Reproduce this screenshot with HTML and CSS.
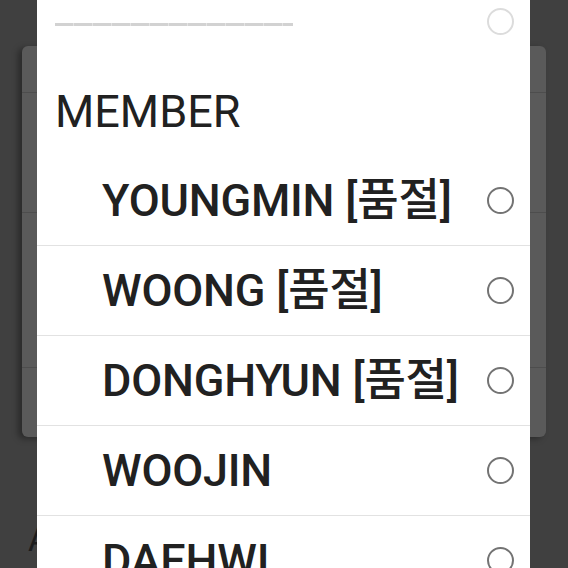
FILE: index.html
```html
<!DOCTYPE html>
<html>
<head>
<meta charset="utf-8">
<meta name="viewport" content="width=device-width, initial-scale=1.0">
<title>Option select</title>
<link rel="stylesheet" href="styles.css">
</head>
<body>
<div class="page">
  <div class="card">
    <div class="card-row r1"></div>
    <div class="card-row r2"></div>
    <div class="card-row r3"></div>
    <div class="card-row r4"></div>
  </div>
  <div class="page-label">A</div>
</div>

<div class="dialog">
  <ul class="options">
    <li class="opt opt-top">
      <span class="dash"></span>
      <span class="radio radio-off"></span>
    </li>
    <li class="group">MEMBER</li>
    <li class="opt item"><span class="name">YOUNGMIN [품절]</span><span class="radio"></span></li>
    <li class="opt item"><span class="name">WOONG [품절]</span><span class="radio"></span></li>
    <li class="opt item"><span class="name">DONGHYUN [품절]</span><span class="radio"></span></li>
    <li class="opt item"><span class="name">WOOJIN</span><span class="radio"></span></li>
    <li class="opt item"><span class="name">DAEHWI</span><span class="radio"></span></li>
  </ul>
</div>
</body>
</html>
```

FILE: styles.css
```css
html, body {
  margin: 0;
  height: 100%;
}
body {
  background: #404040;
  font-family: Roboto, "Noto Sans CJK KR", sans-serif;
  color: #212121;
  overflow: hidden;
}
*, *:before, *:after { box-sizing: border-box; }

/* page behind the dialog */
.page { padding: 46px 22px 0; }
.card {
  height: 391px;
  background: #5a5a5a;
  border-radius: 6px;
  box-shadow: -4px 2px 6px rgba(0, 0, 0, .35);
}
.card-row { border-bottom: 1px solid #4d4d4d; }
.r1 { height: 47px; }
.r2 { height: 120px; }
.r3 { height: 155px; }
.r4 { border-bottom: 0; }
.page-label {
  margin: 86px 0 0 6px;
  font-size: 33px;
  line-height: 1;
  color: #1c1c1c;
}

/* dialog */
.dialog {
  position: fixed;
  top: 0;
  left: 37px;
  width: 493px;
  height: 568px;
  background: #fff;
  overflow: hidden;
}
.options {
  list-style: none;
  margin: -24px 0 0;
  padding: 0;
}
.opt, .group {
  height: 90px;
  display: flex;
  align-items: center;
}
.opt {
  justify-content: space-between;
  padding-right: 16px;
}
.opt-top { padding-left: 18px; }
.dash {
  width: 238px;
  height: 3px;
  margin-top: 6px;
  background: repeating-linear-gradient(90deg, #d2d2d2 0 18px, #e4e4e4 18px 19px);
}
.group {
  padding-left: 18px;
  font-size: 45px;
  font-weight: 400;
}
.item {
  padding-left: 65px;
  border-bottom: 1px solid #e2e2e2;
  font-size: 45px;
  font-weight: 500;
  letter-spacing: -0.2px;
}
.name { line-height: 1; }
.radio {
  width: 27px;
  height: 27px;
  border: 2.5px solid #737373;
  border-radius: 50%;
  flex: none;
}
.radio-off { border-color: #dcdcdc; }
```
